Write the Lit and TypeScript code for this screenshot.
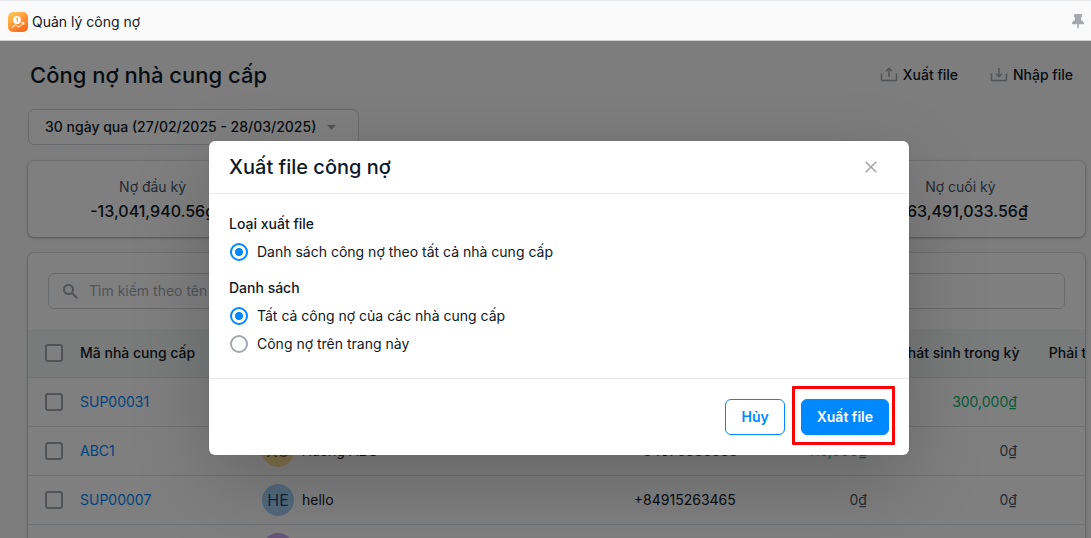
import { LitElement, html, css, svg, nothing } from "lit";
import { customElement, property, state } from "lit/decorators.js";

interface Supplier {
  code: string;
  name: string;
  initials: string;
  tone: string;
  phone: string;
  opening: string;
  openingUp?: boolean;
  change: string;
  changeUp?: boolean;
}

const SUPPLIERS: Supplier[] = [
  { code: "SUP00031", name: "Minh Anh", initials: "MA", tone: "green", phone: "+84912345678", opening: "0₫", change: "300,000₫", changeUp: true },
  { code: "ABC1", name: "Xưởng ABC", initials: "XƯ", tone: "yellow", phone: "+84978888888", opening: "110,000₫", openingUp: true, change: "0₫" },
  { code: "SUP00007", name: "hello", initials: "HE", tone: "blue", phone: "+84915263465", opening: "0₫", change: "0₫" },
  { code: "SUP00006", name: "Kho Linh", initials: "KL", tone: "purple", phone: "+84987654321", opening: "0₫", change: "0₫" },
];

const SUMMARY = [
  { label: "Nợ đầu kỳ", value: "-13,041,940.56₫" },
  { label: "Phải thu trong kỳ", value: "300,000₫" },
  { label: "Phải trả trong kỳ", value: "0₫" },
  { label: "Nợ cuối kỳ", value: "-163,491,033.56₫" },
];

const trayIcon = (up: boolean) => html`<svg class="tray" width="18" height="16" viewBox="0 0 18 16" aria-hidden="true">
  <path d="M1.500 6.500v6a1 1 0 0 0 1 1h13a1 1 0 0 0 1-1v-6" />
  ${up ? svg`<path d="M9 10V1.500M6 4.200 9 1.300l3 2.900" />` : svg`<path d="M9 1v8.500M6 6.800 9 9.700l3-2.900" />`}
</svg>`;

@customElement("export-dialog")
export class ExportDialog extends LitElement {
  @state() private scope = "all";

  static styles = css`
    :host { display: block; width: 100%; max-width: 700px; }
    * { box-sizing: border-box; }
    .dialog {
      background: #fff; border-radius: 6px; color: #0f1824;
      box-shadow: 0 26px 80px rgba(0, 0, 0, 0.2), 0 0 1px rgba(0, 0, 0, 0.2);
    }
    .head {
      display: flex; align-items: center; justify-content: space-between;
      height: 53px; padding: 0 28px 0 20px; border-bottom: 1px solid #e8eaeb;
    }
    h2 { margin: 0; font-size: 20px; line-height: 28px; font-weight: 500; }
    button { font: inherit; cursor: pointer; }
    .close { display: flex; padding: 4px; border: 0; background: none; }
    .close svg { fill: none; stroke: #a3a8af; stroke-width: 1.6; }
    .body { display: flex; flex-direction: column; gap: 12px; padding: 20px; }
    fieldset { margin: 0; padding: 0; border: 0; min-width: 0; }
    legend { padding: 0; margin-bottom: 4px; line-height: 20px; font-weight: 500; }
    .option { display: flex; align-items: center; gap: 9px; height: 28px; padding-left: 1px; }
    .option input {
      appearance: none; width: 18px; height: 18px; margin: 0; flex: none;
      border: 2px solid #a3a8af; border-radius: 50%; background: #fff;
    }
    .option input:checked { border-color: #0088ff; background: radial-gradient(circle, #0088ff 3.6px, #fff 4.4px); }
    .foot {
      display: flex; justify-content: flex-end; gap: 16px;
      padding: 20px; border-top: 1px solid #e8eaeb;
    }
    .btn {
      height: 36px; padding: 0 15px; border: 1px solid #0088ff; border-radius: 6px;
      background: #fff; color: #0088ff; font-weight: 600;
    }
    .btn.primary { background: #0088ff; color: #fff; }
    .marked { position: relative; display: flex; }
    .marked::after {
      content: ""; position: absolute; inset: -13px -6px -10px -9px;
      border: 3px solid #ff0000; border-radius: 1px; pointer-events: none;
    }
  `;

  render() {
    return html`<section class="dialog" role="dialog" aria-modal="true" aria-labelledby="dialog-title">
      <header class="head">
        <h2 id="dialog-title">Xuất file công nợ</h2>
        <button class="close" type="button" aria-label="Đóng">
          <svg width="12" height="12" viewBox="0 0 12 12"><path d="m.7.7 10.600 10.600M11.300.7.7 11.300" /></svg>
        </button>
      </header>
      <div class="body">
        <fieldset>
          <legend>Loại xuất file</legend>
          <label class="option"><input type="radio" name="kind" checked />Danh sách công nợ theo tất cả nhà cung cấp</label>
        </fieldset>
        <fieldset>
          <legend>Danh sách</legend>
          <label class="option"><input type="radio" name="scope" .checked=${this.scope === "all"} @change=${() => (this.scope = "all")} />Tất cả công nợ của các nhà cung cấp</label>
          <label class="option"><input type="radio" name="scope" .checked=${this.scope === "page"} @change=${() => (this.scope = "page")} />Công nợ trên trang này</label>
        </fieldset>
      </div>
      <footer class="foot">
        <button class="btn" type="button">Hủy</button>
        <span class="marked"><button class="btn primary" type="button">Xuất file</button></span>
      </footer>
    </section>`;
  }
}

@customElement("supplier-table")
export class SupplierTable extends LitElement {
  @property({ attribute: false }) rows: Supplier[] = [];

  static styles = css`
    :host { display: block; overflow: hidden; }
    * { box-sizing: border-box; }
    table { width: 112%; table-layout: fixed; border-collapse: separate; border-spacing: 0; }
    th, td { height: 49px; padding: 0 16px; border-bottom: 1px solid #e2e4e6; text-align: left; white-space: nowrap; }
    th { background: #f3f4f5; font-weight: 500; }
    .c-check { width: 36px; }
    .c-code { width: 182px; }
    .c-phone { width: 133px; }
    .c-open { width: 132px; }
    .c-change { width: 150px; }
    .c-pay { width: 179px; }
    .pick { padding: 0 0 0 17px; }
    .pick input {
      appearance: none; display: block; width: 18px; height: 18px; margin: 0;
      border: 2px solid #a3a8af; border-radius: 3px; background: #fff;
    }
    .num { text-align: right; color: #4a5568; }
    th.num { color: inherit; }
    .num.up { color: #0db473; }
    a { color: #0088ff; text-decoration: none; }
    .who { display: flex; align-items: center; gap: 8px; }
    .avatar {
      display: grid; place-items: center; width: 32px; height: 32px;
      border-radius: 50%; font-size: 16px; color: #1c4a75;
    }
    .avatar.blue { background: #a6d3fa; }
    .avatar.yellow { background: #ffe299; color: #6b5310; }
    .avatar.purple { background: #cfa9f5; color: #4b2475; }
    .avatar.green { background: #a8ecc8; color: #145c38; }
  `;

  render() {
    return html`<table>
      <colgroup>
        <col class="c-check" /><col class="c-code" /><col /><col class="c-phone" />
        <col class="c-open" /><col class="c-change" /><col class="c-pay" />
      </colgroup>
      <thead><tr>
        <th class="pick"><input type="checkbox" aria-label="Chọn tất cả" /></th>
        <th>Mã nhà cung cấp</th><th>Tên nhà cung cấp</th><th>Điện thoại</th>
        <th class="num">Nợ đầu kỳ</th><th class="num">Phát sinh trong kỳ</th><th>Phải trả cuối kỳ</th>
      </tr></thead>
      <tbody>${this.rows.map((r) => html`<tr>
        <td class="pick"><input type="checkbox" aria-label=${r.code} /></td>
        <td><a href="#">${r.code}</a></td>
        <td><div class="who"><span class="avatar ${r.tone}">${r.initials}</span>${r.name}</div></td>
        <td>${r.phone}</td>
        <td class="num ${r.openingUp ? "up" : ""}">${r.opening}</td>
        <td class="num ${r.changeUp ? "up" : ""}">${r.change}</td>
        <td>${nothing}</td>
      </tr>`)}</tbody>
    </table>`;
  }
}

@customElement("app-root")
export class AppRoot extends LitElement {
  static styles = css`
    :host {
      display: flex; flex-direction: column; height: 100vh; overflow: hidden;
      font: 14px/20px Inter, "Liberation Sans", sans-serif; color: #0f1824; background: #fafafa;
    }
    * { box-sizing: border-box; }
    .bar {
      display: flex; align-items: center; gap: 4px; height: 41px; flex: none; padding: 2px 7px 0 8px;
      background: #fafafa; border-top: 1px solid #e9eaeb; border-bottom: 1px solid #d0d1d2;
    }
    .bar-name { flex: 1; }
    .pin { display: flex; padding: 0; border: 0; background: none; }
    .stage { position: relative; flex: 1; min-height: 0; overflow: hidden; }
    .page { display: flex; flex-direction: column; gap: 16px; padding: 20px 6px 0 28px; }
    .title-row { display: flex; align-items: center; justify-content: space-between; height: 28px; margin-bottom: 4px; padding-left: 2px; }
    h1 { margin: 0; font-size: 22px; line-height: 28px; font-weight: 500; }
    .actions { display: flex; gap: 32px; padding-right: 12px; }
    .action, .range { font: inherit; font-weight: 500; color: inherit; cursor: pointer; }
    .action { display: flex; align-items: center; gap: 5px; padding: 0; border: 0; background: none; }
    .tray { fill: none; stroke: #a3a8af; stroke-width: 1.5; }
    .range {
      display: flex; align-items: center; gap: 11px; align-self: flex-start; height: 36px;
      padding: 0 22px 0 16px; border: 1px solid #d3d5d7; border-radius: 6px; background: #fff;
    }
    .card { background: #fff; border-radius: 6px; box-shadow: 0 0 0 1px rgba(63, 63, 68, 0.08), 0 1px 3px rgba(63, 63, 68, 0.4); }
    .summary { display: grid; grid-template-columns: repeat(4, 1fr); gap: 20px; margin: 0; padding: 14px 0; text-align: center; line-height: 24px; }
    .summary dt { color: #4a5568; }
    .summary dd { margin: 0; font-size: 16px; font-weight: 500; }
    .list { overflow: hidden; }
    .search {
      display: flex; align-items: center; gap: 11px; height: 36px; margin: 20px;
      padding: 0 14px; border: 1px solid #d3d5d7; border-radius: 6px;
    }
    .search input { flex: 1; min-width: 0; padding: 0; border: 0; outline: 0; background: none; font: inherit; color: inherit; }
    .search input::placeholder { color: #a3a8af; opacity: 1; }
    .overlay {
      position: absolute; inset: 0; display: flex; justify-content: center; align-items: flex-start;
      padding: 100px 0 0 27px; background: rgba(0, 0, 0, 0.5);
    }
  `;

  render() {
    return html`
      <header class="bar">
        <svg width="20" height="20" viewBox="0 0 20 20" aria-hidden="true">
          <defs><linearGradient id="g" x1="0" y1="0" x2=".7" y2="1">
            <stop offset="0" stop-color="#ffd05c" /><stop offset="1" stop-color="#fc6a1c" />
          </linearGradient></defs>
          <rect width="20" height="20" rx="5" fill="url(#g)" />
          <circle cx="9" cy="8" r="3.900" fill="#fff" />
          <path d="M8.300 6.700 9.300 6.100V10" fill="none" stroke="#fba83c" stroke-width="1.100" />
          <path d="m4.300 15.300 3.200-2.500 3.300 2.300 4.200-3.700M13.800 10.600l2-.2v2" fill="none" stroke="#ffe0c0" stroke-width="1.100" stroke-linecap="round" stroke-linejoin="round" />
        </svg>
        <span class="bar-name">Quản lý công nợ</span>
        <button class="pin" type="button" aria-label="Ghim">
          <svg width="12" height="15" viewBox="0 0 12 15" fill="#a3a8af">
            <path d="M3.200 0h5.600a1.300 1.300 0 0 1 1.300 1.300v.9A1.300 1.300 0 0 1 9 3.400l.2 2.800C11 6.800 12 8.200 12 9.500a.8.8 0 0 1-.8.8H6.800V13L6 15l-.8-2v-2.700H.8a.8.8 0 0 1-.8-.8C0 8.200 1 6.800 2.800 6.200L3 3.400a1.300 1.300 0 0 1-1.100-1.200v-.9A1.300 1.300 0 0 1 3.200 0Z" />
          </svg>
        </button>
      </header>
      <div class="stage">
        <main class="page">
          <div class="title-row">
            <h1>Công nợ nhà cung cấp</h1>
            <div class="actions">
              <button class="action" type="button">${trayIcon(true)}Xuất file</button>
              <button class="action" type="button">${trayIcon(false)}Nhập file</button>
            </div>
          </div>
          <button class="range" type="button">30 ngày qua (27/02/2025 - 28/03/2025)
            <svg width="9" height="5" viewBox="0 0 9 5" fill="#a3a8af"><path d="M0 0h9L4.500 4.800Z" /></svg>
          </button>
          <dl class="card summary">${SUMMARY.map((s) => html`<div><dt>${s.label}</dt><dd>${s.value}</dd></div>`)}</dl>
          <section class="card list">
            <label class="search">
              <svg width="15" height="15" viewBox="0 0 15 15" fill="none" stroke="#a3a8af" stroke-width="2" aria-hidden="true">
                <circle cx="5.500" cy="5.500" r="4.500" /><path d="m9 9 5.200 5.200" />
              </svg>
              <input type="search" aria-label="Tìm kiếm" placeholder="Tìm kiếm theo tên hoặc mã nhà cung cấp" />
            </label>
            <supplier-table .rows=${SUPPLIERS}></supplier-table>
          </section>
        </main>
        <div class="overlay"><export-dialog></export-dialog></div>
      </div>
    `;
  }
}
